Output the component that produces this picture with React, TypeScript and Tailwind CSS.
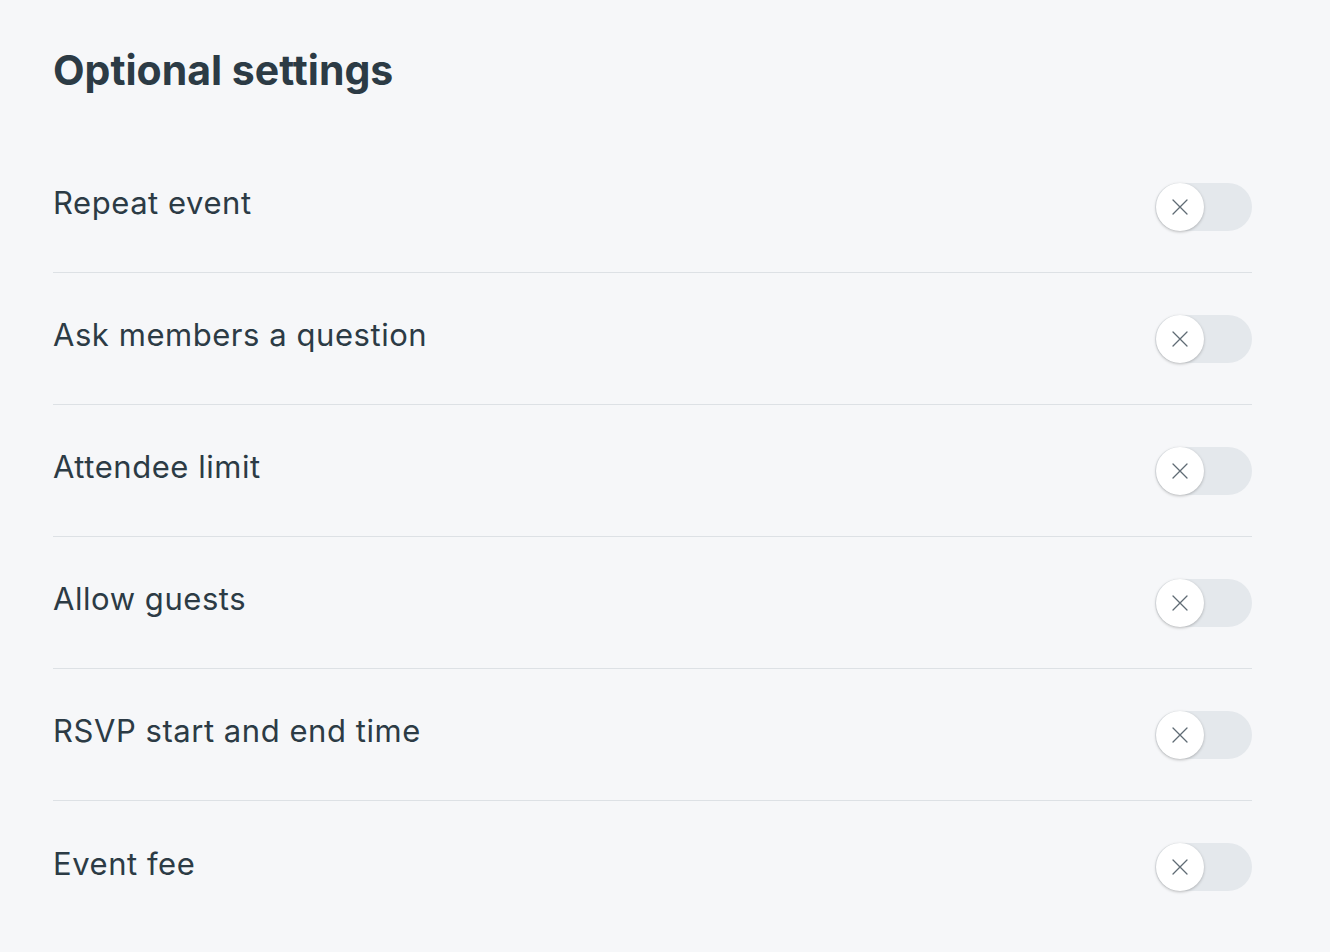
const settings = [
  "Repeat event",
  "Ask members a question",
  "Attendee limit",
  "Allow guests",
  "RSVP start and end time",
  "Event fee",
];

const Toggle = () => (
  <div className="relative h-[48px] w-[97px] rounded-full bg-[#e4e8ec]">
    <div className="absolute left-[1px] top-0 flex h-[48px] w-[48px] items-center justify-center rounded-full bg-white shadow-[0_1px_3px_rgba(0,0,0,0.25)]">
      <svg width="16" height="16" viewBox="0 0 16 16" fill="none">
        <path
          d="M1 1L15 15M15 1L1 15"
          stroke="#5f6b74"
          strokeWidth="1.3"
          strokeLinecap="round"
        />
      </svg>
    </div>
  </div>
);

export default function App() {
  return (
    <div
      className="min-h-screen bg-[#f6f7f9] pl-[53px] text-[#2c3b45]"
      style={{ fontFamily: "Inter, 'Noto Sans', sans-serif" }}
    >
      <div className="w-[1199px]">
        <div className="flex h-[141px] items-start pt-[43px]">
          <h1 className="text-[41px] font-bold leading-[54px]">
            Optional settings
          </h1>
        </div>
        {settings.map((label, i) => (
          <div
            key={label}
            className={`flex h-[132px] items-center justify-between ${
              i < settings.length - 1 ? "border-b border-[#dde1e5]" : ""
            }`}
          >
            <span className="-mt-[7px] text-[31px] leading-[40px] tracking-[0.55px]">
              {label}
            </span>
            <Toggle />
          </div>
        ))}
      </div>
    </div>
  );
}
